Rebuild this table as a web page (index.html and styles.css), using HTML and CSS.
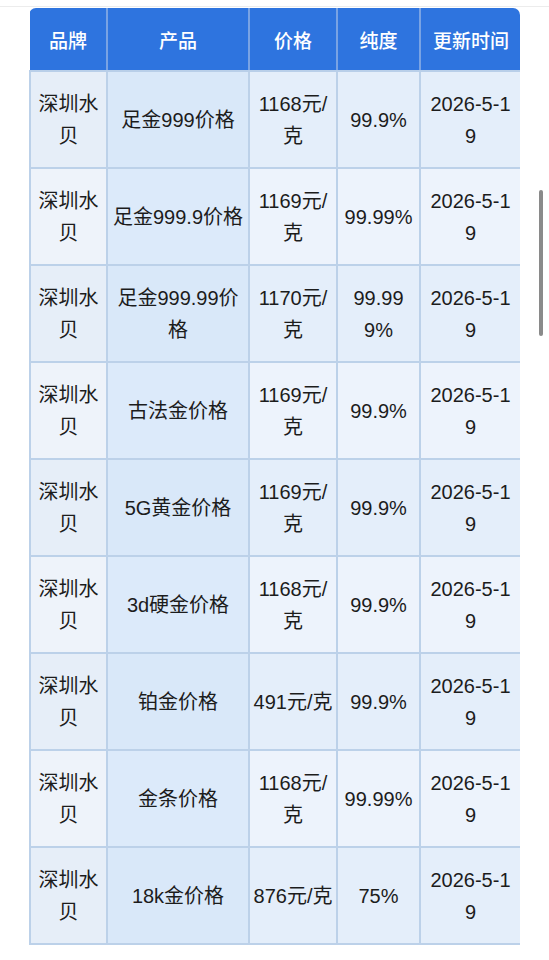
FILE: index.html
```html
<!DOCTYPE html>
<html lang="zh-CN">
<head>
<meta charset="utf-8">
<title>深圳水贝金价</title>
<link rel="stylesheet" href="styles.css">
</head>
<body>
<div class="page">
  <div class="topline"></div>
  <div class="table-wrap">
    <table class="price-table">
      <colgroup>
        <col class="c-brand"><col class="c-prod"><col class="c-price"><col class="c-purity"><col class="c-date">
      </colgroup>
      <thead>
        <tr><th>品牌</th><th>产品</th><th>价格</th><th>纯度</th><th>更新时间</th></tr>
      </thead>
      <tbody>
        <tr><td class="brand">深圳水<br>贝</td><td class="prod">足金999价格</td><td>1168元/<br>克</td><td>99.9%</td><td>2026-5-1<br>9</td></tr>
        <tr><td class="brand">深圳水<br>贝</td><td class="prod">足金999.9价格</td><td>1169元/<br>克</td><td>99.99%</td><td>2026-5-1<br>9</td></tr>
        <tr><td class="brand">深圳水<br>贝</td><td class="prod">足金999.99价<br>格</td><td>1170元/<br>克</td><td>99.99<br>9%</td><td>2026-5-1<br>9</td></tr>
        <tr><td class="brand">深圳水<br>贝</td><td class="prod">古法金价格</td><td>1169元/<br>克</td><td>99.9%</td><td>2026-5-1<br>9</td></tr>
        <tr><td class="brand">深圳水<br>贝</td><td class="prod">5G黄金价格</td><td>1169元/<br>克</td><td>99.9%</td><td>2026-5-1<br>9</td></tr>
        <tr><td class="brand">深圳水<br>贝</td><td class="prod">3d硬金价格</td><td>1168元/<br>克</td><td>99.9%</td><td>2026-5-1<br>9</td></tr>
        <tr><td class="brand">深圳水<br>贝</td><td class="prod">铂金价格</td><td>491元/克</td><td>99.9%</td><td>2026-5-1<br>9</td></tr>
        <tr><td class="brand">深圳水<br>贝</td><td class="prod">金条价格</td><td>1168元/<br>克</td><td>99.99%</td><td>2026-5-1<br>9</td></tr>
        <tr><td class="brand">深圳水<br>贝</td><td class="prod">18k金价格</td><td>876元/克</td><td>75%</td><td>2026-5-1<br>9</td></tr>
      </tbody>
    </table>
  </div>
  <div class="scrollbar"></div>
</div>
</body>
</html>
```

FILE: styles.css
```css
html, body {
  margin: 0;
  padding: 0;
  background: #ffffff;
}
body {
  font-family: "Liberation Sans", "Noto Sans CJK SC", sans-serif;
  color: #1c1c1c;
}
.page {
  position: relative;
  width: 549px;
  height: 960px;
  overflow: hidden;
}
.topline {
  height: 6px;
  border-bottom: 1px solid #ececec;
  margin-bottom: 1px;
}
.table-wrap {
  margin-left: 29px;
  width: 491px;
  border-radius: 7px 7px 0 0;
  overflow: hidden;
}
.price-table {
  width: 491px;
  table-layout: fixed;
  border-collapse: collapse;
  text-align: center;
}
.c-brand { width: 77px; }
.c-prod { width: 142px; }
.c-price { width: 88px; }
.c-purity { width: 83px; }
.c-date { width: 101px; }

.price-table th {
  background: #2e74df;
  color: #ffffff;
  font-weight: 500;
  font-size: 19px;
  height: 62px;
  padding: 0;
  border-left: 2px solid #79a3e4;
  border-right: 2px solid #79a3e4;
  border-bottom: 2px solid #b9cfe9;
}
.price-table th:first-child { border-left: none; }
.price-table th:last-child { border-right: none; }

.price-table td {
  height: 95px;
  padding: 0;
  font-size: 20px;
  line-height: 32px;
  border: 2px solid #bcd1e9;
  background: #e4eefa;
}
.price-table tbody tr:nth-child(even) td {
  background: #edf3fc;
}
.price-table td.brand {
  background: #e6eef8;
}
.price-table tbody tr:nth-child(even) td.brand {
  background: #eef3fa;
}
.price-table td.prod {
  background: #d9e8f9;
}
.price-table tbody tr:nth-child(even) td.prod {
  background: #dceafa;
}
.scrollbar {
  position: absolute;
  left: 539px;
  top: 190px;
  width: 4px;
  height: 146px;
  border-radius: 2px;
  background: #8a8a8a;
}
```
